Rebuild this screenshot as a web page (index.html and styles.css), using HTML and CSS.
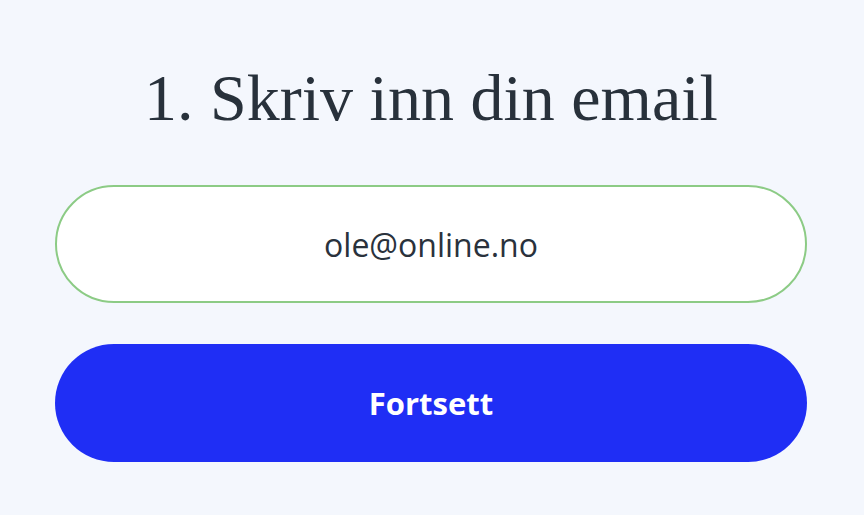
FILE: index.html
```html
<!DOCTYPE html>
<html lang="no">
<head>
<meta charset="utf-8">
<link rel="stylesheet" href="styles.css">
</head>
<body>
<main class="step">
  <h1 class="step-title">1. Skriv inn din email</h1>
  <div class="email-field">ole@online.no</div>
  <button class="continue-btn">Fortsett</button>
</main>
</body>
</html>
```
FILE: styles.css
```css
html, body {
  margin: 0;
  padding: 0;
  background: #f4f7fd;
}
.step {
  display: flex;
  flex-direction: column;
  padding: 62px 57px 0 55px;
}
.step-title {
  margin: 0 0 51px;
  text-align: center;
  font-family: "Liberation Serif", "DejaVu Serif", serif;
  font-weight: 400;
  font-size: 66px;
  line-height: 72px;
  color: #28313b;
}
.email-field {
  box-sizing: border-box;
  height: 118px;
  border: 2px solid #8ccb85;
  border-radius: 59px;
  background: #fff;
  display: flex;
  align-items: center;
  justify-content: center;
  font-family: "Open Sans", "Noto Sans", sans-serif;
  font-size: 32px;
  color: #2a323c;
}
.continue-btn {
  margin-top: 41px;
  height: 118px;
  border: none;
  border-radius: 59px;
  background: #1f2ef5;
  color: #fff;
  font-family: "Open Sans", "Noto Sans", sans-serif;
  font-weight: 700;
  font-size: 31px;
  padding: 0;
}
```
